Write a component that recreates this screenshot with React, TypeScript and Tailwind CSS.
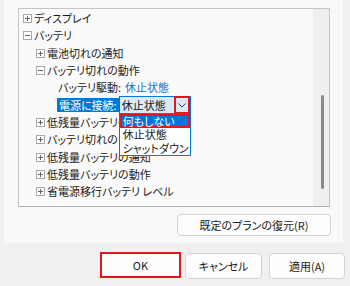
import React from 'react';

// 電源オプションの詳細設定ダイアログ（バッテリ項目を展開し、ドロップダウンを開いた状態）

type Row = {
  level: 1 | 2;
  label: string;
  open?: boolean;
};

function Expander({ open }: { open?: boolean }) {
  return (
    <svg width="9" height="9" viewBox="0 0 9 9" className="shrink-0">
      <rect x="0.5" y="0.5" width="8" height="8" fill="#fff" stroke="#a8a8a8" />
      <path d="M2 4.5h5" stroke="#666" />
      {!open && <path d="M4.5 2v5" stroke="#666" />}
    </svg>
  );
}

function TreeRow({ row }: { row: Row }) {
  return (
    <div
      className={`flex h-[17.3px] items-center gap-[2px] ${row.level === 1 ? 'pl-[4px]' : 'pl-[17px]'}`}
    >
      <Expander open={row.open} />
      <span className="whitespace-nowrap">{row.label}</span>
    </div>
  );
}

const top: Row[] = [
  { level: 1, label: 'ディスプレイ' },
  { level: 1, label: 'バッテリ', open: true },
  { level: 2, label: '電池切れの通知' },
  { level: 2, label: 'バッテリ切れの動作', open: true },
];

const bottom: Row[] = [
  { level: 2, label: '低残量バッテリのレベル' },
  { level: 2, label: 'バッテリ切れのレベル' },
  { level: 2, label: '低残量バッテリの通知' },
  { level: 2, label: '低残量バッテリの動作' },
  { level: 2, label: '省電源移行バッテリ レベル' },
];

const options = ['何もしない', '休止状態', 'シャットダウン'];

function Combo() {
  return (
    <div className="relative z-10 flex h-[18px] w-[72px] items-center border border-[#0078d7] bg-[#d8eaf9]">
      <span className="flex-1 pl-[2px] whitespace-nowrap">休止状態</span>
      <div className="flex h-[18px] w-[16px] items-center justify-center border-2 border-[#e8141c]">
        <svg width="8" height="5" viewBox="0 0 8 5">
          <path d="M0.5 0.5L4 4L7.5 0.5" fill="none" stroke="#444" />
        </svg>
      </div>
      <div className="absolute top-[16px] left-[-1px] w-[72px] border border-[#0078d7] bg-white">
        {options.map((o, i) => (
          <div
            key={o}
            className={
              i === 0
                ? 'flex h-[14px] items-center border-2 border-[#e8141c] bg-[#0078d7] pl-[1px] text-white'
                : 'flex h-[13.5px] items-center pl-[3px] whitespace-nowrap text-[#1a1a1a]'
            }
          >
            {o}
          </div>
        ))}
      </div>
    </div>
  );
}

function Button({
  children,
  className,
}: {
  children: React.ReactNode;
  className: string;
}) {
  return (
    <div
      className={`flex items-center justify-center bg-[#fdfdfd] text-[11px] text-[#1a1a1a] ${className}`}
    >
      {children}
    </div>
  );
}

export default function App() {
  return (
    <div
      className="h-[286px] w-[350px] overflow-hidden bg-[#f0f0f0] text-[11px] leading-none text-[#1a1a1a] [font-feature-settings:'palt']"
      style={{ fontFamily: '"Noto Sans CJK JP", "Noto Sans", sans-serif' }}
    >
      <div className="ml-[4px] h-[243px] w-[339px] bg-[#f9f9f9] pt-[8px] pl-[14px]">
        <div className="flex h-[199px] w-[312px] border border-[#c5c5c5] border-b-[#b0b0b0] bg-[#fafafa]">
          <div className="flex-1 pt-[1px]">
            {top.map((r) => (
              <TreeRow key={r.label} row={r} />
            ))}
            <div className="flex h-[17.3px] items-center pl-[39px] whitespace-nowrap">
              <span>バッテリ駆動:</span>
              <span className="ml-[4px] text-[#1f6fc5]">休止状態</span>
            </div>
            <div className="flex h-[17.3px] items-center pl-[38px]">
              <span className="flex h-[14px] items-center bg-[#0078d7] px-[2px] whitespace-nowrap text-white">
                電源に接続:
              </span>
              <Combo />
            </div>
            {bottom.map((r) => (
              <TreeRow key={r.label} row={r} />
            ))}
          </div>
          <div className="flex w-[16px] flex-col items-center bg-[#efefef] pt-[86px]">
            <div className="ml-[3px] h-[94px] w-[3px] rounded-full bg-[#8a8a8a]" />
          </div>
        </div>
        <Button className="mt-[7px] ml-[159px] h-[22px] w-[154px] rounded-[4px] border border-[#d3d3d3]">
          既定のプランの復元(R)
        </Button>
      </div>
      <div className="mt-[9px] flex items-start">
        <Button className="ml-[100px] h-[26px] w-[81px] border-2 border-[#e8141c]">OK</Button>
        <Button className="mt-[1px] ml-[4px] h-[26px] w-[77px] rounded-[4px] border border-[#d3d3d3]">
          キャンセル
        </Button>
        <Button className="mt-[1px] ml-[7px] h-[26px] w-[76px] rounded-[4px] border border-[#d3d3d3]">
          適用(A)
        </Button>
      </div>
    </div>
  );
}
